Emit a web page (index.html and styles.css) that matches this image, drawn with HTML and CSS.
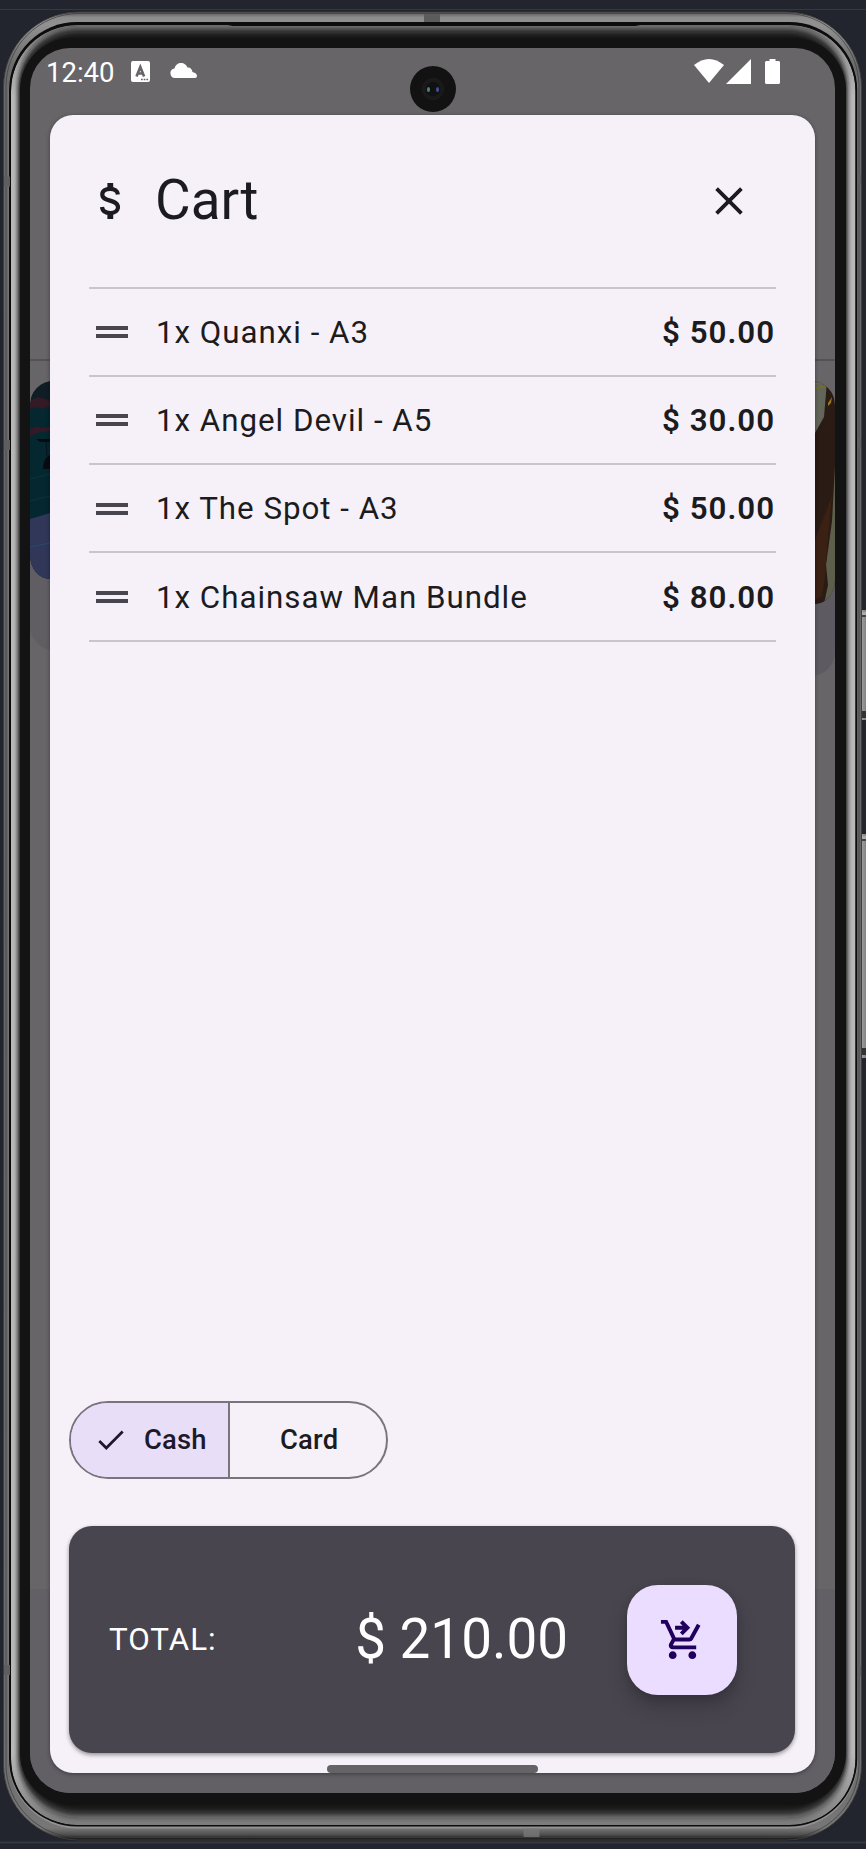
FILE: index.html
```html
<!DOCTYPE html>
<html lang="en">
<head>
<meta charset="utf-8">
<title>Cart</title>
<link rel="stylesheet" href="styles.css">
</head>
<body>
<div class="stage">
  <svg class="device" viewBox="0 0 866 1849" aria-hidden="true">
    <defs>
      <linearGradient id="rim" x1="0" y1="0" x2="0" y2="1">
        <stop offset="0" stop-color="#555"/><stop offset=".003" stop-color="#8d8c8c"/><stop offset=".007" stop-color="#929191"/><stop offset=".03" stop-color="#6a6a6a"/>
        <stop offset=".5" stop-color="#666"/><stop offset=".97" stop-color="#707070"/><stop offset=".9935" stop-color="#777"/><stop offset=".997" stop-color="#505050"/><stop offset="1" stop-color="#111"/>
      </linearGradient>
      <linearGradient id="key" x1="0" y1="0" x2="1" y2="0">
        <stop offset="0" stop-color="#555"/><stop offset=".3" stop-color="#999"/><stop offset="1" stop-color="#777"/>
      </linearGradient>
      <linearGradient id="bevel" x1="0" y1="0" x2="0" y2="1">
        <stop offset="0" stop-color="#858585"/><stop offset=".04" stop-color="#b8b8b8"/><stop offset=".96" stop-color="#b8b8b8"/><stop offset="1" stop-color="#7d7d7d"/>
      </linearGradient>
      <clipPath id="glass"><rect x="11" y="25" width="844.5" height="1800" rx="66"/></clipPath>
      <filter id="soft" x="-5%" y="-5%" width="110%" height="110%"><feGaussianBlur stdDeviation="2.2 4.5"/></filter>
    </defs>
    <path d="M0 9.5H866" stroke="#343842"/>
    <path d="M0 1842.5H866" stroke="#353941" stroke-width="2"/>
    <rect x="860" y="610" width="8" height="110" fill="url(#key)"/>
    <rect x="861" y="612" width="5" height="3" fill="#aaa"/><rect x="861" y="615" width="5" height="2" fill="#444"/><rect x="861" y="711" width="5" height="7" fill="#333"/>
    <rect x="860" y="834" width="8" height="224" fill="url(#key)"/>
    <rect x="861" y="836" width="5" height="3" fill="#aaa"/><rect x="861" y="839" width="5" height="2" fill="#444"/><rect x="861" y="1048" width="5" height="7" fill="#333"/>
    <rect x="3" y="11" width="859" height="1830" rx="76" fill="#1c1c1e"/>
    <rect x="3.5" y="12" width="858" height="1828" rx="75" fill="url(#rim)" stroke="#3f3f41"/>
    <rect x="6" y="13.5" width="853" height="1824" rx="73" fill="none" stroke="#3c3c3c" stroke-opacity=".7"/>
    <rect x="8.7" y="22" width="849" height="1806.500" rx="69" fill="#929292"/>
    <rect x="9" y="22" width="848.3" height="1804.5" rx="68" fill="#0c0c0c"/>
    <g clip-path="url(#glass)">
      <rect x="11" y="25" width="844.5" height="1800" rx="66" fill="url(#bevel)"/>
      <rect x="18" y="29" width="829.5" height="1786" rx="60" fill="#131313" filter="url(#soft)"/>
      <rect x="20" y="38" width="826" height="1767" rx="52" fill="#131313"/>
    </g>
    <path d="M222 24L233 26H635L646 24z" fill="#0c0c0c"/>
    <path d="M432 14V22" stroke="#5c5c5c" stroke-width="16"/>
    <path d="M531.500 1828.500V1837" stroke="#777" stroke-width="16" stroke-opacity=".8"/>
    <path d="M4 181.500H10M4 445H10M4 1670H10M857 179.500H861M857 443H861M857 1671H861" stroke="#5e5e5e" stroke-width="10"/>
  </svg>

  <main class="screen">
    <div class="peek peek-line"></div>
    <div class="peek product-left"><svg viewBox="0 0 20 198" preserveAspectRatio="none">
      <rect width="20" height="198" fill="#05272f"/><rect width="20" height="18" fill="#101d24"/>
      <path d="M0 20l8-4 12 4v5l-9 3-3-2-8 2zM0 48l7-3 5 2 8-1v4l-10 1-10 4z" fill="#341a27"/>
      <path d="M6 58h14v3H10zM13 88q0-11 7-14v14h-7z" fill="#090b12"/><path d="M16 60l1 15" stroke="#090b12" stroke-width=".7"/>
      <path d="M0 98l20-5M0 120l20-5" stroke="#0d343d"/><path d="M0 138l20-6v66H0z" fill="#303759"/><path d="M0 166l20-4" stroke="#2b486d"/>
    </svg></div>
    <div class="peek product-right"><svg viewBox="0 0 20 223" preserveAspectRatio="none">
      <rect width="20" height="223" fill="#2a1b14"/><path d="M0 0h12L9 36 0 52z" fill="#62655a"/><path d="M0 3l12-2M0 8l12-4" stroke="#807312"/>
      <path d="M13 22l4-6-1 6-3 3zM8 158l5-3-2 4-4 1z" fill="#99761a"/>
      <path d="M20 85l-3 55-6 44 2 20-4 19h11z" fill="#5d5e4b"/><path d="M17 115l-4 40-3 40-3 20-7 4v-60z" fill="#3b2114"/>
    </svg></div>
    <div class="peek nav-bg"></div>

    <header class="status">
      <span class="clock">12:40</span>
      <svg class="ic-note" viewBox="0 0 19 21"><rect width="19" height="21" rx="2" fill="#fff"/><path d="M5.500 15.500L9.300 6l3.800 9.500M6.700 12.500h5.300" fill="none" stroke="#686569" stroke-width="2.600"/><path d="M10 18.500h8" stroke="#686569" stroke-width="1.600" stroke-dasharray="1.700 1"/></svg>
      <svg class="ic-cloud" viewBox="0 0 27 15"><path d="M5 15a5 4.800 0 0 1-.5-9.500C6-1.500 15-2 17.500 4.500q4-.5 5 4.500 4.500 1 4.500 4 0 2-2 2z" fill="#fff"/></svg>
      <span class="spacer"></span>
      <svg class="ic-wifi" viewBox="0 0 30 24"><path d="M0 6Q15-6 30 6L15 24z" fill="#fff"/></svg>
      <svg class="ic-signal" viewBox="0 0 25 25"><path d="M25 0v25H0z" fill="#fff"/></svg>
      <svg class="ic-battery" viewBox="0 0 15 25"><path d="M4.500 0h6v2H14l1 1v21l-1 1H1l-1-1V3l1-1h3.500z" fill="#fff"/></svg>
    </header>
    <svg class="camera" viewBox="0 0 46 46"><circle cx="23" cy="23" r="23" fill="#121212"/><circle cx="23" cy="23" r="10.500" fill="#191919" stroke="#1e1e1e"/><circle cx="23" cy="23" r="7" fill="#111"/><ellipse cx="18.500" cy="23.500" rx="1.500" ry="2.500" fill="#4c858d"/><ellipse cx="27.500" cy="23.500" rx="1.500" ry="2.500" fill="#3f529d"/></svg>

    <section class="dialog">
      <div class="head">
        <svg class="ic-dollar" viewBox="0 0 20 36"><path d="M17.900 11.500C17.600 7.800 14.300 5.800 10.200 5.800 5.600 5.800 2.300 7.900 2.300 11.400c0 8.100 15.700 4.300 15.700 12.600 0 3.700-3.200 6-7.800 6-4.900 0-7.900-2.300-8.200-6" fill="none" stroke="#1c1b20" stroke-width="4.200"/><path d="M10.300 0v6M10.300 29.500V36" stroke="#1c1b20" stroke-width="5.800"/></svg>
        <h1 class="title">Cart</h1>
        <svg class="ic-close" viewBox="0 0 28 28"><path d="M1.600 1.600L26.400 26.400M26.400 1.600L1.600 26.400" stroke="#1c1b20" stroke-width="3.800"/></svg>
      </div>
      <ul class="items">
        <li class="item"><span class="handle"></span><span class="name">1x Quanxi - A3</span><span class="price">$ 50.00</span></li>
        <li class="item"><span class="handle"></span><span class="name">1x Angel Devil - A5</span><span class="price">$ 30.00</span></li>
        <li class="item"><span class="handle"></span><span class="name">1x The Spot - A3</span><span class="price">$ 50.00</span></li>
        <li class="item"><span class="handle"></span><span class="name">1x Chainsaw Man Bundle</span><span class="price">$ 80.00</span></li>
      </ul>
      <div class="segments">
        <div class="segment selected"><svg class="ic-check" viewBox="0 0 26 20"><path d="M1.300 11L8.300 18 24.700 1.500" fill="none" stroke="#1d192b" stroke-width="2.700"/></svg><span>Cash</span></div>
        <div class="segment plain"><span>Card</span></div>
      </div>
      <div class="total">
        <span class="total-label">TOTAL:</span>
        <span class="total-value">$ 210.00</span>
        <div class="fab"><svg class="ic-cart" viewBox="0 0 24 24"><path fill="#21005d" d="M7 18c-1.100 0-1.990.9-1.990 2S5.900 22 7 22s2-.9 2-2-.9-2-2-2zm10 0c-1.100 0-1.990.9-1.990 2s.89 2 1.990 2 2-.9 2-2-.9-2-2-2zm-9.830-3.250l.03-.12.9-1.630h7.450c.75 0 1.410-.41 1.750-1.030l3.860-7.010L19.420 4h-.01l-1.100 2-2.760 5H8.530l-.13-.27L6.160 6l-.95-2-.94-2H1v2h2l3.600 7.590-1.350 2.450c-.16.28-.25.61-.25.96 0 1.100.9 2 2 2h12v-2H7.420c-.13 0-.25-.11-.25-.25z"/><path d="M8.200 6h6M11.400 2.900L14.500 6l-3.100 3.100" fill="none" stroke="#21005d" stroke-width="2"/></svg></div>
      </div>
    </section>
    <div class="home-bar"></div>
  </main>
</div>
</body>
</html>
```

FILE: styles.css
```css
* { box-sizing: border-box; }
body { margin: 0; background: #22252e; font-family: Roboto, "Liberation Sans", sans-serif; }
svg { display: block; flex: none; }
.stage { position: relative; width: 866px; height: 1849px; padding: 48px 31px 56px 30px; overflow: hidden; }
.device { position: absolute; inset: 0; width: 866px; height: 1849px; }
.screen { position: relative; width: 805px; height: 1745px; border-radius: 40px; background: #686569; overflow: hidden; }

/* Dimmed app content behind the dialog */
.peek { position: absolute; }
.peek svg { width: 20px; height: 100%; }
.peek-line { top: 311px; left: 0; right: 0; height: 2px; background: #555257; }
.product-left { left: 0; top: 333px; width: 70px; height: 269px; border-radius: 24px; background: #605e63; overflow: hidden; }
.product-left svg { height: 198px; width: 20px; border-radius: 20px 0 0 20px / 24px 0 0 24px; }
.product-right { right: 0; top: 333px; width: 70px; height: 295px; border-radius: 24px; background: #5d5b61; overflow: hidden; }
.product-right svg { height: 223px; margin-left: 50px; border-radius: 0 20px 20px 0 / 0 24px 24px 0; }
.nav-bg { left: 0; right: 0; top: 1541px; bottom: 0; background: #626065; }

.status { position: relative; display: flex; align-items: flex-start; height: 66.500px; padding: 11px 55px 0 16px; color: #fff; }
.clock { width: 85px; margin-top: -4px; font-size: 27.500px; line-height: 36px; white-space: nowrap; }
.ic-note { width: 19px; height: 21px; margin-top: 2px; }
.ic-cloud { width: 27px; height: 15px; margin: 4px 0 0 20px; }
.spacer { flex: 1; }
.ic-wifi { width: 30px; height: 24px; }
.ic-signal { width: 25px; height: 25px; margin-left: 2px; }
.ic-battery { width: 15px; height: 25px; margin-left: 14px; }
.camera { position: absolute; left: 380px; top: 18px; width: 46px; height: 46px; }

.dialog { position: relative; display: flex; flex-direction: column; width: 765.500px; height: 1658.500px; margin-left: 19.500px; padding: 0 20px 20px 19.500px; border-radius: 23px; background: #f6f1f9; color: #1c1b20; box-shadow: 0 1px 4px #0006; }
.head { display: flex; align-items: center; height: 172px; padding: 0 52px 0 31px; }
.ic-dollar { width: 20px; height: 36px; }
.title { flex: 1; margin: -2px 0 0 35px; font-size: 54.800px; font-weight: 400; line-height: 70px; }
.ic-close { width: 28px; height: 28px; }
.items { list-style: none; margin: 0 19px 0 20px; padding: 0; border-top: 2px solid #cac4cf; }
.item { display: flex; align-items: center; height: 88.300px; padding: 1px 1px 0 7px; border-bottom: 2px solid #cac4cf; font-size: 31.300px; letter-spacing: .98px; white-space: nowrap; }
.handle { width: 32px; height: 12px; border: solid #49454e; border-width: 4px 0; }
.name { flex: 1; margin-left: 28px; }
.price { font-weight: 600; }

.segments { display: flex; width: 319px; height: 78px; margin-top: auto; border: 2px solid #79747e; border-radius: 39px; overflow: hidden; font-size: 27.400px; font-weight: 500; letter-spacing: .2px; }
.segment { display: flex; align-items: center; width: 156px; }
.selected { gap: 20px; width: 159px; padding-left: 27px; border-right: 2px solid #79747e; background: #e8def8; color: #1d192b; }
.plain { padding-left: 50px; }
.ic-check { width: 26px; height: 20px; }

.total { display: flex; align-items: center; height: 227px; margin-top: 47px; padding: 0 58px 0 40px; border-radius: 23px; background: #49454f; color: #fff; box-shadow: 0 2px 4px #0006; white-space: nowrap; }
.total-label { flex: 1; font-size: 31.300px; letter-spacing: .98px; }
.total-value { font-size: 54.800px; margin: -1px 59px 0 0; }
.fab { display: flex; align-items: center; justify-content: center; width: 110px; height: 110px; border-radius: 31px; background: #eaddff; box-shadow: 0 12px 20px #0003, 0 3px 8px #0002; }
.ic-cart { width: 47px; height: 47px; }
.home-bar { position: absolute; left: 297px; top: 1717px; width: 211px; height: 8px; border-radius: 4px; background: #666367; }
```
